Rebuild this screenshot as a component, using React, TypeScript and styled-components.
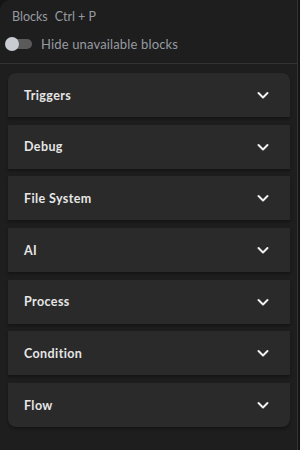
import React from "react";
import styled, { createGlobalStyle } from "styled-components";

const Global = createGlobalStyle`
  html, body { margin: 0; padding: 0; background: #141414; }
  body { font-family: Lato, "Noto Sans", sans-serif; }
`;

const Panel = styled.div`
  width: 298px;
  height: 450px;
  background: #1e1e1e;
  border-top-left-radius: 10px;
  border-right: 1px solid #333;
  box-sizing: border-box;
  display: flex;
  flex-direction: column;
`;

const Header = styled.div`
  padding: 9px 12px 0 12px;
  height: 64px;
  box-sizing: border-box;
  border-bottom: 1px solid #333;
  display: flex;
  flex-direction: column;
  gap: 10px;
`;

const Title = styled.div`
  display: flex;
  gap: 7px;
  color: #979ba1;
  font-size: 12.5px;
  line-height: 16px;
`;

const ToggleRow = styled.div`
  display: flex;
  align-items: center;
  gap: 8px;
  margin-left: -7px;
  color: #979ba1;
  font-size: 13px;
  letter-spacing: 0.15px;
  line-height: 18px;
`;

const Toggle = styled.div`
  position: relative;
  width: 28px;
  height: 14px;
  display: flex;
  align-items: center;
`;

const Track = styled.div`
  margin-left: 3px;
  width: 24px;
  height: 10px;
  border-radius: 5px;
  background: #5a5a5a;
`;

const Knob = styled.div`
  position: absolute;
  left: 0;
  top: 0;
  width: 14px;
  height: 14px;
  border-radius: 50%;
  background: #c9ccd1;
`;

const List = styled.div`
  padding: 9px 7px 0 8px;
  display: flex;
  flex-direction: column;
  gap: 7.7px;
`;

const Card = styled.div<{ $first?: boolean; $last?: boolean }>`
  height: 44px;
  background: #2a2a2a;
  border-radius: ${(p) => (p.$first ? "8px 8px 0 0" : p.$last ? "0 0 8px 8px" : "0")};
  box-shadow: 0 2px 3px rgba(0, 0, 0, 0.35);
  display: flex;
  align-items: center;
  justify-content: space-between;
  padding: 0 20px 0 16px;
`;

const CardTitle = styled.span`
  color: #e6e6e6;
  font-weight: 700;
  font-size: 12.5px;
  letter-spacing: 0.4px;
`;

const Chevron = () => (
  <svg width="14" height="14" viewBox="0 0 14 14" fill="none">
    <path d="M2.5 5l4.5 4.5L11.5 5" stroke="#f0f0f0" strokeWidth="2" strokeLinecap="round" strokeLinejoin="round" />
  </svg>
);

const items = ["Triggers", "Debug", "File System", "AI", "Process", "Condition", "Flow"];

export default function App() {
  return (
    <>
      <Global />
      <Panel>
        <Header>
          <Title>
            <span>Blocks</span>
            <span>Ctrl + P</span>
          </Title>
          <ToggleRow>
            <Toggle>
              <Track />
              <Knob />
            </Toggle>
            <span>Hide unavailable blocks</span>
          </ToggleRow>
        </Header>
        <List>
          {items.map((t, i) => (
            <Card key={t} $first={i === 0} $last={i === items.length - 1}>
              <CardTitle>{t}</CardTitle>
              <Chevron />
            </Card>
          ))}
        </List>
      </Panel>
    </>
  );
}
